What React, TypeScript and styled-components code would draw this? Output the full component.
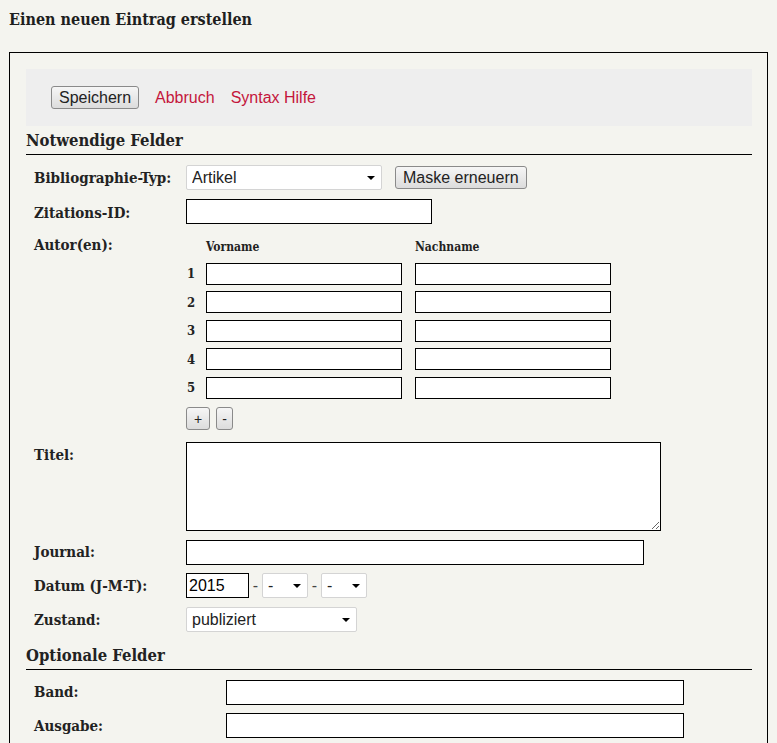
import React from 'react';
import styled, { createGlobalStyle } from 'styled-components';

const GlobalStyle = createGlobalStyle`
  html, body {
    margin: 0;
    padding: 0;
    background: #f4f4ef;
    color: #222;
    font-family: "Liberation Sans", Arial, sans-serif;
  }
`;

const serif = `"DejaVu Serif Condensed", "DejaVu Serif", serif`;

const Page = styled.div`
  padding: 0 9px;
`;

const Title = styled.h1`
  margin: 0;
  padding: 10px 0 0;
  height: 52px;
  box-sizing: border-box;
  font-family: ${serif};
  font-size: 16px;
  font-weight: bold;
  line-height: 20px;
  color: #1e1e1e;
`;

const Box = styled.div`
  border: 1px solid #000;
  padding: 16px 15px 16px 16px;
  min-height: 720px;
`;

const Toolbar = styled.div`
  height: 57px;
  background: #eeeeee;
  display: flex;
  align-items: center;
  gap: 16px;
  padding-left: 25px;
`;

const Button = styled.button<{ $small?: boolean; $pad?: number }>`
  font-family: "Liberation Sans", Arial, sans-serif;
  font-size: ${({ $small }) => ($small ? '14px' : '16px')};
  color: #222;
  height: 23px;
  padding: 0 ${({ $pad }) => $pad ?? 7}px;
  border: 1px solid #8a8a8a;
  border-radius: 3px;
  background: linear-gradient(#f6f6f6, #dcdcdc);
  cursor: pointer;
`;

const ToolLink = styled.a`
  color: #c4163c;
  font-size: 16px;
  text-decoration: none;
  cursor: pointer;
`;

const SectionHead = styled.h2<{ $top: number }>`
  margin: ${({ $top }) => $top}px 0 0;
  padding-bottom: 2px;
  border-bottom: 1px solid #000;
  font-family: ${serif};
  font-size: 16.5px;
  font-weight: bold;
  color: #222;
  line-height: 22px;
`;

const Fields = styled.div<{ $label: number }>`
  display: grid;
  grid-template-columns: ${({ $label }) => $label}px 1fr;
  align-items: center;
  padding: 10px 0 0 8px;
`;

const Label = styled.label<{ $top?: number; $mb?: number }>`
  font-family: ${serif};
  font-size: 15px;
  font-weight: bold;
  color: #222;
  align-self: ${({ $top }) => ($top !== undefined ? 'start' : 'center')};
  padding-top: ${({ $top }) => $top ?? 0}px;
  margin-bottom: ${({ $mb }) => $mb ?? 9}px;
`;

const Cell = styled.div<{ $mb?: number }>`
  display: flex;
  align-items: center;
  margin-bottom: ${({ $mb }) => $mb ?? 9}px;
`;

const TextInput = styled.input<{ $w: number; $h?: number }>`
  width: ${({ $w }) => $w}px;
  height: ${({ $h }) => $h ?? 25}px;
  box-sizing: border-box;
  border: 1px solid #000;
  background: #fff;
  font-family: "Liberation Sans", Arial, sans-serif;
  font-size: 16px;
  padding: 0 2px;
  margin: 0;
  outline: none;
`;

const SelectWrap = styled.span<{ $w: number }>`
  position: relative;
  display: inline-block;
  width: ${({ $w }) => $w}px;
  height: 25px;
  &::after {
    content: '';
    position: absolute;
    right: 7px;
    top: 11px;
    border-left: 4px solid transparent;
    border-right: 4px solid transparent;
    border-top: 4px solid #000;
    pointer-events: none;
  }
`;

const Select = styled.select`
  appearance: none;
  width: 100%;
  height: 100%;
  box-sizing: border-box;
  border: 1px solid #d4d4d4;
  border-radius: 2px;
  background: #fff;
  font-family: "Liberation Sans", Arial, sans-serif;
  font-size: 16px;
  color: #222;
  padding: 0 5px;
  margin: 0;
`;

const Dash = styled.span`
  font-size: 16px;
  color: #444;
  width: 13px;
  text-align: center;
`;

const Authors = styled.div`
  display: grid;
  grid-template-columns: 20px 209px 196px;
  row-gap: 6.5px;
  align-items: center;
`;

const ColHead = styled.span`
  font-family: ${serif};
  font-size: 12px;
  font-weight: bold;
  color: #222;
  height: 20px;
  box-sizing: border-box;
  padding-top: 4px;
  line-height: 14px;
`;

const Num = styled.span`
  font-family: ${serif};
  font-size: 13px;
  font-weight: bold;
  color: #222;
  padding-left: 1px;
`;

const PlusMinus = styled.div`
  display: flex;
  gap: 6px;
  margin-top: 2px;
  grid-column: 1 / span 3;
`;

const TextArea = styled.textarea`
  width: 475px;
  height: 89px;
  box-sizing: border-box;
  border: 1px solid #000;
  background: #fff;
  margin: 0;
  font-family: "Liberation Sans", Arial, sans-serif;
  font-size: 16px;
  resize: both;
`;

const Spacer = styled.span<{ $w: number }>`
  width: ${({ $w }) => $w}px;
`;

const authorRows = [1, 2, 3, 4, 5];

export default function App() {
  return (
    <Page>
      <GlobalStyle />
      <Title>Einen neuen Eintrag erstellen</Title>
      <Box>
        <Toolbar>
          <Button>Speichern</Button>
          <ToolLink>Abbruch</ToolLink>
          <ToolLink>Syntax Hilfe</ToolLink>
        </Toolbar>

        <SectionHead $top={4}>Notwendige Felder</SectionHead>
        <Fields $label={152}>
          <Label>Bibliographie-Typ:</Label>
          <Cell>
            <SelectWrap $w={196}>
              <Select defaultValue="Artikel">
                <option>Artikel</option>
              </Select>
            </SelectWrap>
            <Spacer $w={13} />
            <Button>Maske erneuern</Button>
          </Cell>

          <Label>Zitations-ID:</Label>
          <Cell $mb={12}>
            <TextInput $w={246} />
          </Cell>

          <Label $top={0}>Autor(en):</Label>
          <Cell $mb={12}>
            <Authors>
              <span />
              <ColHead>Vorname</ColHead>
              <ColHead>Nachname</ColHead>
              {authorRows.map((n) => (
                <React.Fragment key={n}>
                  <Num>{n}</Num>
                  <TextInput $w={196} $h={22} />
                  <TextInput $w={196} $h={22} />
                </React.Fragment>
              ))}
              <PlusMinus>
                <Button $small $pad={7}>+</Button>
                <Button $small $pad={5}>-</Button>
              </PlusMinus>
            </Authors>
          </Cell>

          <Label $top={4}>Titel:</Label>
          <Cell>
            <TextArea />
          </Cell>

          <Label>Journal:</Label>
          <Cell $mb={8}>
            <TextInput $w={458} />
          </Cell>

          <Label>Datum (J-M-T):</Label>
          <Cell>
            <TextInput $w={63} defaultValue="2015" />
            <Dash>-</Dash>
            <SelectWrap $w={46}>
              <Select defaultValue="-">
                <option>-</option>
              </Select>
            </SelectWrap>
            <Dash>-</Dash>
            <SelectWrap $w={46}>
              <Select defaultValue="-">
                <option>-</option>
              </Select>
            </SelectWrap>
          </Cell>

          <Label $mb={0}>Zustand:</Label>
          <Cell $mb={0}>
            <SelectWrap $w={171}>
              <Select defaultValue="publiziert">
                <option>publiziert</option>
              </Select>
            </SelectWrap>
          </Cell>
        </Fields>

        <SectionHead $top={13}>Optionale Felder</SectionHead>
        <Fields $label={192}>
          <Label>Band:</Label>
          <Cell $mb={8}>
            <TextInput $w={458} />
          </Cell>
          <Label>Ausgabe:</Label>
          <Cell>
            <TextInput $w={458} />
          </Cell>
        </Fields>
      </Box>
    </Page>
  );
}
